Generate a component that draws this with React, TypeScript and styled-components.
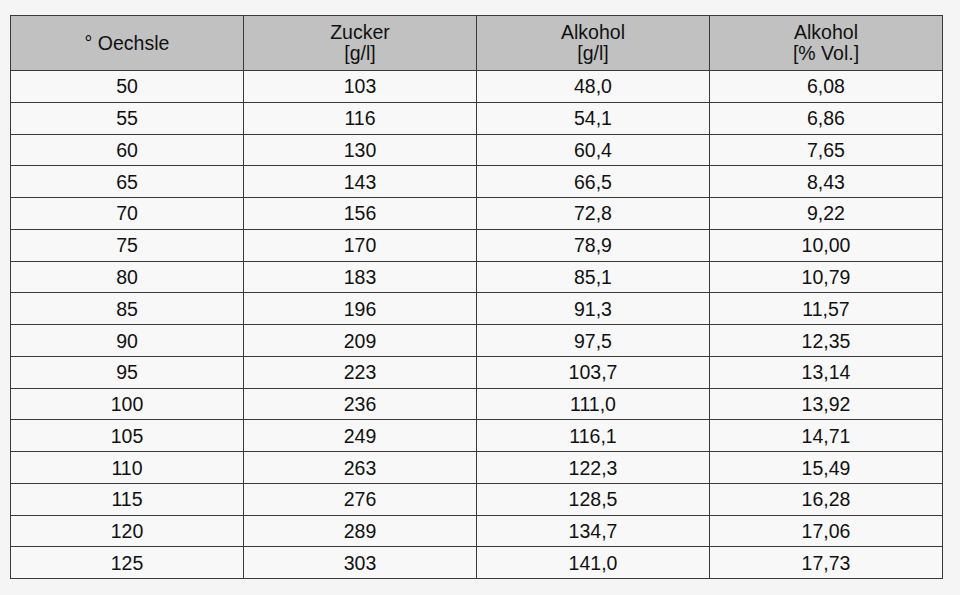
import React from 'react';
import styled, { createGlobalStyle } from 'styled-components';

const GlobalStyle = createGlobalStyle`
  html, body {
    margin: 0;
    padding: 0;
    background: #f5f5f5;
    font-family: "Liberation Sans", Arial, sans-serif;
  }
`;

const Page = styled.div`
  width: 960px;
  height: 595px;
  padding: 15px 0 0 10px;
  box-sizing: border-box;
`;

const Table = styled.table`
  width: 933px;
  border-collapse: collapse;
  table-layout: fixed;
  color: #111;
  font-size: 19.5px;
`;

const HeadCell = styled.th`
  height: 54px;
  padding: 0;
  background: #c1c1c1;
  border: 1.5px solid #3a3a3a;
  font-weight: normal;
  line-height: 21px;
  text-align: center;
  vertical-align: middle;
`;

const Cell = styled.td`
  height: 30.78px;
  padding: 0;
  background: #f8f8f8;
  border: 1.5px solid #3a3a3a;
  text-align: center;
  vertical-align: middle;
  line-height: 20px;
`;

const rows: [number, number, string, string][] = [
  [50, 103, '48,0', '6,08'],
  [55, 116, '54,1', '6,86'],
  [60, 130, '60,4', '7,65'],
  [65, 143, '66,5', '8,43'],
  [70, 156, '72,8', '9,22'],
  [75, 170, '78,9', '10,00'],
  [80, 183, '85,1', '10,79'],
  [85, 196, '91,3', '11,57'],
  [90, 209, '97,5', '12,35'],
  [95, 223, '103,7', '13,14'],
  [100, 236, '111,0', '13,92'],
  [105, 249, '116,1', '14,71'],
  [110, 263, '122,3', '15,49'],
  [115, 276, '128,5', '16,28'],
  [120, 289, '134,7', '17,06'],
  [125, 303, '141,0', '17,73'],
];

const App: React.FC = () => (
  <Page>
    <GlobalStyle />
    <Table>
      <thead>
        <tr>
          <HeadCell>° Oechsle</HeadCell>
          <HeadCell>
            Zucker
            <br />
            [g/l]
          </HeadCell>
          <HeadCell>
            Alkohol
            <br />
            [g/l]
          </HeadCell>
          <HeadCell>
            Alkohol
            <br />
            [% Vol.]
          </HeadCell>
        </tr>
      </thead>
      <tbody>
        {rows.map((r) => (
          <tr key={r[0]}>
            {r.map((v, i) => (
              <Cell key={i}>{v}</Cell>
            ))}
          </tr>
        ))}
      </tbody>
    </Table>
  </Page>
);

export default App;
